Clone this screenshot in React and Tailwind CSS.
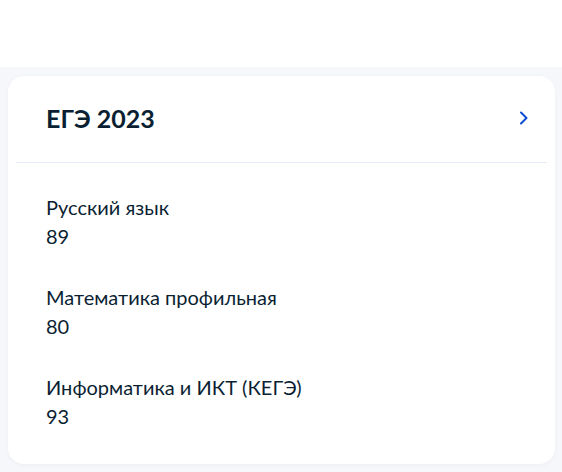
import React from "react";

const results = [
  { subject: "Русский язык", score: 89 },
  { subject: "Математика профильная", score: 80 },
  { subject: "Информатика и ИКТ (КЕГЭ)", score: 93 },
];

export default function App() {
  return (
    <div className="min-h-[472px] bg-white font-['Lato','Noto_Sans',sans-serif] text-[#0b1f33]">
      <div className="h-[67px] bg-white" />

      <div className="bg-[#f5f7fa] pt-[9px] pb-2 pl-2 pr-[7px]">
        <div className="rounded-[16px] bg-white shadow-[0_1px_4px_rgba(11,31,51,0.04)]">
          {/* Header */}
          <div className="flex items-center justify-between pl-[38px] pr-[27px] pt-[26px] pb-[28px]">
            <h2 className="text-[25px] font-bold leading-8">ЕГЭ 2023</h2>
            <svg width="8" height="14" viewBox="0 0 8 14" fill="none">
              <path
                d="M1 1.5L6.5 7L1 12.5"
                stroke="#0d4cd3"
                strokeWidth="2"
                strokeLinecap="round"
                strokeLinejoin="round"
              />
            </svg>
          </div>

          <div className="mx-2 h-px bg-[#e3eaf6]" />

          {/* Results */}
          <div className="pl-[38px] pr-6 pt-[30px] pb-[33px]">
            {results.map((r, i) => (
              <div key={r.subject} className={i < results.length - 1 ? "mb-8" : ""}>
                <div className="text-[20px] leading-[29px]">{r.subject}</div>
                <div className="text-[20px] leading-[29px]">{r.score}</div>
              </div>
            ))}
          </div>
        </div>
      </div>
    </div>
  );
}
